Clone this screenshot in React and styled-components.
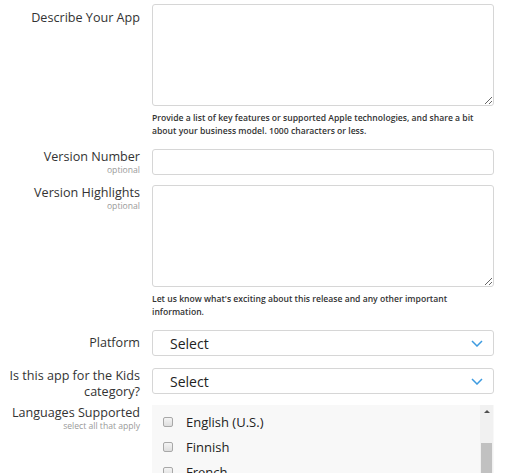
import * as React from 'react';
import styled, { createGlobalStyle } from 'styled-components';

const GlobalStyle = createGlobalStyle`
  html, body {
    margin: 0;
    padding: 0;
    background: #fff;
  }
  body {
    font-family: "Open Sans", "Liberation Sans", sans-serif;
    color: #333;
  }
`;

const Form = styled.div`
  display: grid;
  grid-template-columns: 140px 342px;
  column-gap: 12px;
  padding-top: 4px;
`;

const Label = styled.div`
  text-align: right;
  padding-top: ${({ offset }) => offset || 0}px;
  font-size: 12.6px;
  line-height: 16px;
  color: #333;
`;

const SubLabel = styled.div`
  margin-top: 1px;
  font-size: 8.6px;
  line-height: 9px;
  color: #9a9a9a;
`;

const Field = styled.div`
  display: flex;
  flex-direction: column;
  margin-bottom: ${({ gap }) => gap || 0}px;
`;

const TextArea = styled.textarea`
  box-sizing: border-box;
  width: 342px;
  height: 102px;
  margin: 0;
  border: 1px solid #d6d6d6;
  border-radius: 3px;
  background: #fff;
  resize: vertical;
  font-family: inherit;
`;

const Input = styled.input`
  box-sizing: border-box;
  width: 342px;
  height: 26px;
  margin: 0;
  border: 1px solid #d6d6d6;
  border-radius: 3px;
  background: #fff;
`;

const Help = styled.p`
  margin: 6px 0 0;
  font-size: 8.6px;
  line-height: 13px;
  font-weight: 600;
  color: #333;
`;

const SelectBox = styled.div`
  box-sizing: border-box;
  height: 26px;
  display: flex;
  align-items: center;
  justify-content: space-between;
  padding: 0 10px 0 17px;
  border: 1px solid #d6d6d6;
  border-radius: 3px;
  background: #fff;
  font-size: 14px;
  color: #222;
`;

const ListBox = styled.div`
  display: flex;
  height: 120px;
  background: #f8f8f8;
  overflow: hidden;
`;

const List = styled.div`
  flex: 1;
  padding-top: 4px;
  padding-left: 11px;
`;

const Option = styled.label`
  display: flex;
  align-items: center;
  height: 25px;
  font-size: 13px;
  color: #222;
`;

const Check = styled.span`
  box-sizing: border-box;
  width: 10px;
  height: 10px;
  margin-right: 13px;
  border: 1px solid #a8a8a8;
  border-radius: 2px;
  background: linear-gradient(#f4f4f4, #dedede);
`;

const Scrollbar = styled.div`
  width: 13px;
  display: flex;
  flex-direction: column;
  align-items: center;
  background: #f1f1f1;
  margin-right: 1px;
`;

const Arrow = styled.div`
  margin-top: 5px;
  width: 0;
  height: 0;
  border-left: 3px solid transparent;
  border-right: 3px solid transparent;
  border-bottom: 3px solid #505050;
`;

const Thumb = styled.div`
  margin-top: 30px;
  width: 11px;
  flex: 1;
  background: #c1c1c1;
`;

const Chevron = () => (
  <svg width="12" height="7" viewBox="0 0 12 7">
    <polyline points="1,1 6,6 11,1" fill="none" stroke="#3d9be0" strokeWidth="1.5" />
  </svg>
);

const languages = ['English (U.S.)', 'Finnish', 'French', 'German'];

export default function App() {
  return (
    <>
      <GlobalStyle />
      <Form>
        <Label offset={6}>Describe Your App</Label>
        <Field gap={11}>
          <TextArea readOnly />
          <Help>
            Provide a list of key features or supported Apple technologies, and share a bit
            about your business model. 1000 characters or less.
          </Help>
        </Field>

        <Label>
          Version Number
          <SubLabel>optional</SubLabel>
        </Label>
        <Field gap={10}>
          <Input readOnly />
        </Field>

        <Label>
          Version Highlights
          <SubLabel>optional</SubLabel>
        </Label>
        <Field gap={11}>
          <TextArea readOnly />
          <Help>
            Let us know what's exciting about this release and any other important
            information.
          </Help>
        </Field>

        <Label offset={5}>Platform</Label>
        <Field gap={12}>
          <SelectBox>
            Select
            <Chevron />
          </SelectBox>
        </Field>

        <Label offset={0}>Is this app for the Kids category?</Label>
        <Field gap={11}>
          <SelectBox>
            Select
            <Chevron />
          </SelectBox>
        </Field>

        <Label>
          Languages Supported
          <SubLabel>select all that apply</SubLabel>
        </Label>
        <Field>
          <ListBox>
            <List>
              {languages.map((lang) => (
                <Option key={lang}>
                  <Check />
                  {lang}
                </Option>
              ))}
            </List>
            <Scrollbar>
              <Arrow />
              <Thumb />
            </Scrollbar>
          </ListBox>
        </Field>
      </Form>
    </>
  );
}
